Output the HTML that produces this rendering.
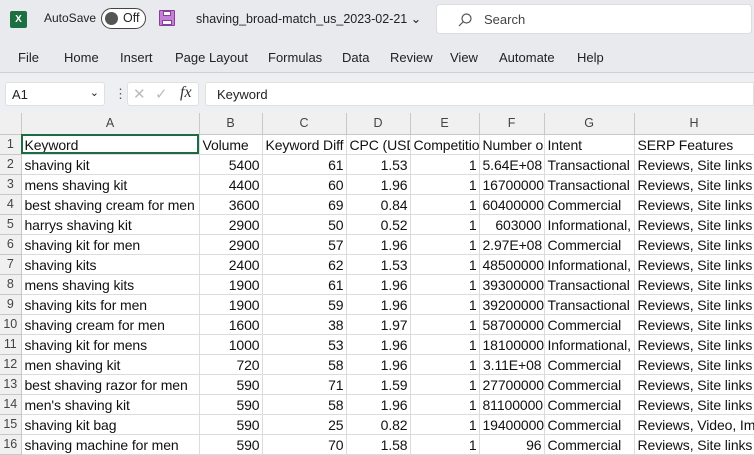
<!DOCTYPE html>
<html><head><meta charset="utf-8"><style>
*{margin:0;padding:0;box-sizing:border-box}
body{width:754px;height:453px;overflow:hidden;background:#e9eaee;font-family:"Liberation Sans",sans-serif;position:relative;color:#222}
.a{position:absolute}
.menu span{position:absolute;top:50px;font-size:13px;color:#222}
table{position:absolute;left:0;top:113px;width:754px;border-collapse:collapse;table-layout:fixed;background:#fff}
td{height:20px;border-right:1px solid #dadce0;border-bottom:1px solid #dadce0;font-size:14px;padding:1px 2px 0 3px;white-space:nowrap;overflow:hidden;color:#111;letter-spacing:-0.1px}
td.r{text-align:right}
td.h{background:#f0f0f0;color:#444;text-align:center;border-color:#c8c8c8;font-size:12.5px;padding:0}
td.n{background:#f0f0f0;color:#444;text-align:center;border-color:#c8c8c8;padding:0;font-size:12.5px}
tr:first-child td{height:21px}
</style></head><body>
<div class="a" style="left:10px;top:11px;width:17px;height:17px;background:#1d6f42;border-radius:2px;color:#fff;font-size:10px;font-weight:bold;text-align:center;line-height:17px">X</div>
<div class="a" style="left:44px;top:11px;font-size:12px">AutoSave</div>
<div class="a" style="left:101px;top:8px;width:45px;height:21px;border:1.5px solid #444;border-radius:11px;background:#fff"><div style="position:absolute;left:3px;top:3px;width:13px;height:13px;border-radius:50%;background:#555"></div><span style="position:absolute;left:21px;top:2px;font-size:12.5px">Off</span></div>
<div class="a" style="left:159px;top:10px;width:16px;height:16px;background:#c67fd6;border:1.5px solid #8a3e9c;border-radius:1px"><div style="position:absolute;left:3px;top:0;width:8px;height:5px;background:#fff;border:1px solid #8a3e9c"></div><div style="position:absolute;left:2px;top:9px;width:10px;height:5px;background:#fff;border:1px solid #8a3e9c"></div></div>
<div class="a" style="left:196px;top:11px;font-size:12.5px">shaving_broad-match_us_2023-02-21 &#8964;</div>
<div class="a" style="left:436px;top:4px;width:316px;height:30px;background:#fff;border-radius:4px;border:1px solid #ddd"><svg style="position:absolute;left:20px;top:7px" width="16" height="16"><circle cx="9.5" cy="6.5" r="4.5" fill="none" stroke="#555" stroke-width="1.2"/><path d="M6.3 9.7 L2 14" stroke="#555" stroke-width="1.2"/></svg><span style="position:absolute;left:47px;top:7px;font-size:13px;color:#444">Search</span></div>
<div class="menu"><span style="left:18px">File</span><span style="left:64px">Home</span><span style="left:120px">Insert</span><span style="left:175px">Page Layout</span><span style="left:268px">Formulas</span><span style="left:342px">Data</span><span style="left:390px">Review</span><span style="left:450px">View</span><span style="left:499px">Automate</span><span style="left:577px">Help</span></div>
<div class="a" style="left:0;top:72px;width:754px;height:1px;background:#d0d0d4"></div>
<div class="a" style="left:0;top:73px;width:754px;height:40px;background:#eeeff2"></div>
<div class="a" style="left:5px;top:82px;width:100px;height:24px;background:#fff;border-radius:3px;border:1px solid #e0e0e0;font-size:13px;padding:4px 6px">A1<span style="position:absolute;right:5px;top:3px;font-size:11px">&#8964;</span></div>
<div class="a" style="left:114px;top:86px;font-size:13px;color:#555">&#8942;</div>
<div class="a" style="left:127px;top:82px;width:72px;height:24px;background:#fff;border-radius:3px;border:1px solid #e0e0e0"><span style="position:absolute;left:5px;top:2px;color:#bbb;font-size:15px">✕</span><span style="position:absolute;left:27px;top:2px;color:#bbb;font-size:15px">✓</span><span style="position:absolute;left:52px;top:1px;font-family:'Liberation Serif',serif;font-style:italic;font-size:16px;color:#333">fx</span></div>
<div class="a" style="left:205px;top:82px;width:549px;height:24px;background:#fff;border-radius:3px 0 0 3px;border:1px solid #e0e0e0;font-size:13px;padding:4px 11px">Keyword</div>
<table>
<colgroup><col style="width:21px"><col style="width:178px"><col style="width:63px"><col style="width:84px"><col style="width:64px"><col style="width:69px"><col style="width:65px"><col style="width:90px"><col style="width:120px"></colgroup>
<tr><td class="n"></td><td class="h">A</td><td class="h">B</td><td class="h">C</td><td class="h">D</td><td class="h">E</td><td class="h">F</td><td class="h">G</td><td class="h">H</td></tr>
<tr><td class="n">1</td><td style="outline:2px solid #1e6b42;outline-offset:-2px">Keyword</td><td>Volume</td><td>Keyword Diff</td><td>CPC (USD)</td><td>Competitio</td><td>Number o</td><td>Intent</td><td>SERP Features</td></tr>
<tr><td class="n">2</td><td>shaving kit</td><td class="r">5400</td><td class="r">61</td><td class="r">1.53</td><td class="r">1</td><td class="r">5.64E+08</td><td>Transactional</td><td>Reviews, Site links</td></tr>
<tr><td class="n">3</td><td>mens shaving kit</td><td class="r">4400</td><td class="r">60</td><td class="r">1.96</td><td class="r">1</td><td class="r">16700000</td><td>Transactional</td><td>Reviews, Site links</td></tr>
<tr><td class="n">4</td><td>best shaving cream for men</td><td class="r">3600</td><td class="r">69</td><td class="r">0.84</td><td class="r">1</td><td class="r">60400000</td><td>Commercial</td><td>Reviews, Site links</td></tr>
<tr><td class="n">5</td><td>harrys shaving kit</td><td class="r">2900</td><td class="r">50</td><td class="r">0.52</td><td class="r">1</td><td class="r">603000</td><td>Informational,</td><td>Reviews, Site links</td></tr>
<tr><td class="n">6</td><td>shaving kit for men</td><td class="r">2900</td><td class="r">57</td><td class="r">1.96</td><td class="r">1</td><td class="r">2.97E+08</td><td>Commercial</td><td>Reviews, Site links</td></tr>
<tr><td class="n">7</td><td>shaving kits</td><td class="r">2400</td><td class="r">62</td><td class="r">1.53</td><td class="r">1</td><td class="r">48500000</td><td>Informational,</td><td>Reviews, Site links</td></tr>
<tr><td class="n">8</td><td>mens shaving kits</td><td class="r">1900</td><td class="r">61</td><td class="r">1.96</td><td class="r">1</td><td class="r">39300000</td><td>Transactional</td><td>Reviews, Site links</td></tr>
<tr><td class="n">9</td><td>shaving kits for men</td><td class="r">1900</td><td class="r">59</td><td class="r">1.96</td><td class="r">1</td><td class="r">39200000</td><td>Transactional</td><td>Reviews, Site links</td></tr>
<tr><td class="n">10</td><td>shaving cream for men</td><td class="r">1600</td><td class="r">38</td><td class="r">1.97</td><td class="r">1</td><td class="r">58700000</td><td>Commercial</td><td>Reviews, Site links</td></tr>
<tr><td class="n">11</td><td>shaving kit for mens</td><td class="r">1000</td><td class="r">53</td><td class="r">1.96</td><td class="r">1</td><td class="r">18100000</td><td>Informational,</td><td>Reviews, Site links</td></tr>
<tr><td class="n">12</td><td>men shaving kit</td><td class="r">720</td><td class="r">58</td><td class="r">1.96</td><td class="r">1</td><td class="r">3.11E+08</td><td>Commercial</td><td>Reviews, Site links</td></tr>
<tr><td class="n">13</td><td>best shaving razor for men</td><td class="r">590</td><td class="r">71</td><td class="r">1.59</td><td class="r">1</td><td class="r">27700000</td><td>Commercial</td><td>Reviews, Site links</td></tr>
<tr><td class="n">14</td><td>men's shaving kit</td><td class="r">590</td><td class="r">58</td><td class="r">1.96</td><td class="r">1</td><td class="r">81100000</td><td>Commercial</td><td>Reviews, Site links</td></tr>
<tr><td class="n">15</td><td>shaving kit bag</td><td class="r">590</td><td class="r">25</td><td class="r">0.82</td><td class="r">1</td><td class="r">19400000</td><td>Commercial</td><td>Reviews, Video, Im</td></tr>
<tr><td class="n">16</td><td>shaving machine for men</td><td class="r">590</td><td class="r">70</td><td class="r">1.58</td><td class="r">1</td><td class="r">96</td><td>Commercial</td><td>Reviews, Site links</td></tr>
</table>
</body></html>
